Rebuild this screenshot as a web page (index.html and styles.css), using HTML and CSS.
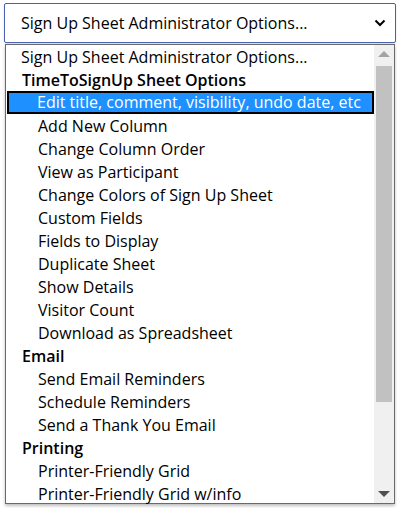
FILE: index.html
```html
<!DOCTYPE html>
<html lang="en">
<head>
  <meta charset="UTF-8">
  <meta name="viewport" content="width=device-width, initial-scale=1.0">
  <title>Sign Up Sheet Administrator Options</title>
  <link rel="stylesheet" href="styles.css">
</head>
<body>
  <!-- closed select -->
  <div class="select">
    <span class="select-text">Sign Up Sheet Administrator Options...</span>
    <svg class="chevron" width="12" height="8" viewBox="0 0 12 8">
      <path d="M1.5 1.5 L6 6 L10.5 1.5" fill="none" stroke="#000" stroke-width="2"/>
    </svg>
  </div>

  <!-- opened list -->
  <div class="listbox">
    <div class="options">
      <div class="option top">Sign Up Sheet Administrator Options...</div>
      <div class="group">TimeToSignUp Sheet Options</div>
      <div class="option selected">Edit title, comment, visibility, undo date, etc</div>
      <div class="option">Add New Column</div>
      <div class="option">Change Column Order</div>
      <div class="option">View as Participant</div>
      <div class="option">Change Colors of Sign Up Sheet</div>
      <div class="option">Custom Fields</div>
      <div class="option">Fields to Display</div>
      <div class="option">Duplicate Sheet</div>
      <div class="option">Show Details</div>
      <div class="option">Visitor Count</div>
      <div class="option">Download as Spreadsheet</div>
      <div class="group">Email</div>
      <div class="option">Send Email Reminders</div>
      <div class="option">Schedule Reminders</div>
      <div class="option">Send a Thank You Email</div>
      <div class="group">Printing</div>
      <div class="option">Printer-Friendly Grid</div>
      <div class="option">Printer-Friendly Grid w/info</div>
    </div>
    <div class="scrollbar">
      <div class="arrow up"></div>
      <div class="thumb"></div>
      <div class="track"></div>
      <div class="arrow down"></div>
    </div>
  </div>
</body>
</html>
```

FILE: styles.css
```css
* {
  margin: 0;
  padding: 0;
  box-sizing: border-box;
}
html, body {
  width: 100%;
  height: 100%;
  background: #fff;
  overflow: hidden;
  font-family: "Open Sans", sans-serif;
  font-size: 16px;
  color: #000;
}
.select {
  margin: 3px 1px 0 4px;
  height: 40px;
  border: 1px solid #4b62ad;
  border-radius: 2px;
  display: flex;
  align-items: center;
  padding: 0 9px 0 16px;
  box-shadow: 0 1px 2px rgba(0, 0, 0, 0.15);
}
.select-text {
  flex: 1;
  white-space: nowrap;
}
.chevron {
  display: block;
}

.listbox {
  margin: 1px 2px 0 5px;
  height: 460px;
  border: 1px solid #6a6a6a;
  display: flex;
  box-shadow: 0 2px 3px rgba(0, 0, 0, 0.25);
}
.options {
  flex: 1;
  display: flex;
  flex-direction: column;
}
.option, .group {
  height: 23px;
  line-height: 22px;
  padding-top: 1px;
  white-space: nowrap;
  padding-left: 32px;
}
.group {
  font-weight: 600;
  padding-left: 16px;
}
.option.top {
  padding-left: 15px;
}
.option.selected {
  background: #1e90ff;
  color: #fff;
  border: 2px solid #000;
  margin-left: 1px;
  padding-left: 28px;
  padding-top: 0;
  line-height: 19px;
}

.scrollbar {
  width: 20px;
  background: #f0f0f0;
  display: flex;
  flex-direction: column;
  align-items: center;
}
.arrow {
  height: 18px;
  width: 100%;
  display: flex;
  align-items: center;
  justify-content: center;
}
.arrow::before {
  content: "";
  border-left: 6px solid transparent;
  border-right: 6px solid transparent;
}
.arrow.up::before {
  border-bottom: 6px solid #a3a3a3;
}
.arrow.down::before {
  border-top: 6px solid #505050;
}
.thumb {
  margin-top: 3px;
  width: 16px;
  height: 336px;
  background: #c1c1c1;
}
.track {
  flex: 1;
}
```
